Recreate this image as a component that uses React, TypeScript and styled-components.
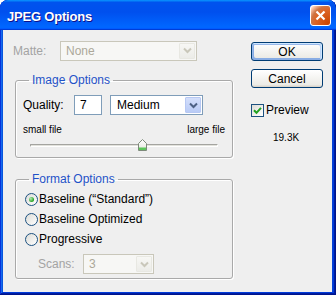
import React from "react";
import styled, { createGlobalStyle } from "styled-components";

const Global = createGlobalStyle`
  html, body { margin: 0; padding: 0; background: #ffffff; }
  body { font-family: "Liberation Sans", Arial, sans-serif; font-size: 12px; color: #000; }
  * { box-sizing: border-box; }
`;

const Window = styled.div`
  width: 336px;
  height: 295px;
  display: flex;
  flex-direction: column;
  background: #0842d5;
  border-radius: 8px 8px 0 0;
  overflow: hidden;
  box-shadow: inset -1px -1px #00138c, inset 1px 1px #0831d9, inset -2px -2px #001ea0,
    inset 2px 2px #166aee, inset -3px -3px #003bda, inset 3px 3px #0855dd;
`;

const TitleBar = styled.div`
  height: 30px;
  flex: none;
  display: flex;
  align-items: center;
  justify-content: space-between;
  padding: 3px 5px 0 7px;
  border-radius: 8px 8px 0 0;
  background: linear-gradient(
    180deg,
    #0997ff,
    #0053ee 8%,
    #0050ee 40%,
    #06f 88%,
    #06f 93%,
    #005bff 95%,
    #003dd7 96%,
    #003dd7
  );
`;

const TitleText = styled.span`
  color: #fff;
  font-weight: bold;
  font-size: 13px;
  letter-spacing: -0.2px;
  text-shadow: 1px 1px #0f1089;
`;

const CloseButton = styled.div`
  width: 21px;
  height: 21px;
  margin-top: -2px;
  border: 1px solid #fff;
  border-radius: 3px;
  display: flex;
  align-items: center;
  justify-content: center;
  background: radial-gradient(circle at 90% 90%, #cc4600 0%, #dc6527 55%, #cd7546 70%, #ffccb2 90%, #fff 100%);
`;

const Body = styled.div`
  flex: 1;
  margin: 0 4px 3px 3px;
  background: #efefef;
  display: flex;
  gap: 18px;
  padding: 10px 0 0 10px;
`;

const LeftCol = styled.div`
  width: 220px;
  display: flex;
  flex-direction: column;
`;

const RightCol = styled.div`
  width: 72px;
  display: flex;
  flex-direction: column;
  padding-top: 2px;
`;

const Row = styled.div<{ $h?: number }>`
  display: flex;
  align-items: center;
  height: ${(p) => p.$h ?? 20}px;
`;

const Label = styled.span<{ $w?: number; $disabled?: boolean }>`
  font-size: 12px;
  width: ${(p) => (p.$w ? `${p.$w}px` : "auto")};
  flex: none;
  color: ${(p) => (p.$disabled ? "#a3a3a3" : "#000")};
`;

const Group = styled.fieldset<{ $mt: number; $pt: number; $pb: number }>`
  margin: ${(p) => p.$mt}px 0 0 2px;
  width: 218px;
  padding: ${(p) => p.$pt}px 7px ${(p) => p.$pb}px 7px;
  border: 1px solid #a9a9a9;
  border-radius: 3px;
  box-shadow: 1px 1px 0 #ffffff, inset 1px 1px 0 #ffffff;
  min-width: 0;
`;

const Legend = styled.legend`
  margin-left: 6px;
  padding: 0 3px;
  font-size: 12px;
  line-height: 14px;
  color: #1f52c8;
`;

const SelectBox = styled.div<{ $w: number; $disabled?: boolean; $h?: number }>`
  width: ${(p) => p.$w}px;
  height: ${(p) => p.$h ?? 20}px;
  flex: none;
  display: flex;
  align-items: stretch;
  border: 1px solid ${(p) => (p.$disabled ? "#c9c7ba" : "#7f9db9")};
  background: ${(p) => (p.$disabled ? "#f7f7f5" : "#fff")};
`;

const SelectValue = styled.span<{ $disabled?: boolean; $pl: number }>`
  flex: 1;
  display: flex;
  align-items: center;
  padding-left: ${(p) => p.$pl}px;
  font-size: 12px;
  color: ${(p) => (p.$disabled ? "#aca899" : "#000")};
`;

const ArrowButton = styled.span<{ $disabled?: boolean }>`
  width: 16px;
  margin: 1px;
  flex: none;
  display: flex;
  align-items: center;
  justify-content: center;
  border: 1px solid ${(p) => (p.$disabled ? "#e8e8e2" : "#b7c8f3")};
  border-radius: 1px;
  background: ${(p) =>
    p.$disabled
      ? "linear-gradient(180deg, #f7f7f4, #ececE8)"
      : "linear-gradient(180deg, #d4dffb, #b9cbf6)"};
`;

const TextInput = styled.div`
  width: 28px;
  height: 20px;
  flex: none;
  display: flex;
  align-items: center;
  padding-left: 5px;
  margin-right: 8px;
  border: 1px solid #7f9db9;
  background: #fff;
  font-size: 12px;
`;

const ScaleLabels = styled.div`
  display: flex;
  justify-content: space-between;
  margin-top: 9px;
  font-size: 10px;
  line-height: 12px;
  height: 12px;
`;

const SliderWrap = styled.div`
  position: relative;
  height: 14px;
  margin: 2px 7px 0 7px;
  display: flex;
  align-items: center;
`;

const Track = styled.div`
  flex: 1;
  height: 3px;
  border-top: 1px solid #a4a4a0;
  border-left: 1px solid #a4a4a0;
  border-bottom: 1px solid #ffffff;
  border-right: 1px solid #ffffff;
  background: #e2e2dc;
  border-radius: 1px;
`;

const Thumb = styled.svg`
  position: absolute;
  top: 1px;
`;

const RadioRow = styled.label`
  display: flex;
  align-items: center;
  height: 20px;
  padding-left: 2px;
  gap: 1px;
  font-size: 12px;
`;

const RadioCircle = styled.span<{ $checked?: boolean }>`
  width: 13px;
  height: 13px;
  flex: none;
  border-radius: 50%;
  border: 1px solid #1c5180;
  background: linear-gradient(135deg, #dcdcd7, #ffffff);
  display: flex;
  align-items: center;
  justify-content: center;
  &::after {
    content: "";
    display: ${(p) => (p.$checked ? "block" : "none")};
    width: 5px;
    height: 5px;
    border-radius: 50%;
    background: radial-gradient(circle at 35% 35%, #b8ecb4, #21a121 70%);
  }
`;

const ScansRow = styled.div`
  display: flex;
  align-items: center;
  margin-top: 5px;
  padding-left: 15px;
  height: 20px;
`;

const Button = styled.button<{ $default?: boolean }>`
  width: 72px;
  height: 19px;
  padding: 0;
  font-family: "Liberation Sans", Arial, sans-serif;
  font-size: 12px;
  color: #000;
  border: 1px solid #003c74;
  border-radius: 3px;
  background: linear-gradient(180deg, #ffffff, #ecebe6 86%, #d6d0c5);
  box-shadow: ${(p) =>
    p.$default
      ? "inset -1px 1px #cee7ff, inset 1px 2px #98b8ea, inset -2px 2px #bcd4f6, inset 1px -1px #89ade4, inset 2px -2px #89ade4"
      : "none"};
  & + & {
    margin-top: 8px;
  }
`;

const CheckRow = styled.label`
  display: flex;
  align-items: center;
  gap: 2px;
  height: 16px;
  margin-top: 14px;
  font-size: 12px;
`;

const CheckBox = styled.span`
  width: 13px;
  height: 13px;
  flex: none;
  border: 1px solid #1c5180;
  background: linear-gradient(135deg, #dcdcd7, #ffffff);
  display: flex;
  align-items: center;
  justify-content: center;
`;

const SizeText = styled.span`
  font-size: 10px;
  margin-top: 14px;
  padding-left: 22px;
`;

const Chevron = ({ disabled }: { disabled?: boolean }) => (
  <svg width="9" height="7" viewBox="0 0 9 7">
    <path
      d="M1 1.5 L4.5 5 L8 1.5"
      fill="none"
      stroke={disabled ? "#c9c7ba" : "#4d6185"}
      strokeWidth="2"
    />
  </svg>
);

const Select = ({
  value,
  width,
  disabled,
  pl,
}: {
  value: string;
  width: number;
  disabled?: boolean;
  pl: number;
}) => (
  <SelectBox $w={width} $disabled={disabled}>
    <SelectValue $disabled={disabled} $pl={pl}>
      {value}
    </SelectValue>
    <ArrowButton $disabled={disabled}>
      <Chevron disabled={disabled} />
    </ArrowButton>
  </SelectBox>
);

export default function App() {
  const quality = 7;
  const frac = quality / 12;
  return (
    <>
      <Global />
      <Window>
        <TitleBar>
          <TitleText>JPEG Options</TitleText>
          <CloseButton>
            <svg width="11" height="11" viewBox="0 0 11 11">
              <path d="M1.5 1.5 L9.5 9.5 M9.5 1.5 L1.5 9.5" stroke="#fff" strokeWidth="2.2" />
            </svg>
          </CloseButton>
        </TitleBar>
        <Body>
          <LeftCol>
            <Row $h={21}>
              <Label $w={47} $disabled>
                Matte:
              </Label>
              <Select value="None" width={137} disabled pl={5} />
            </Row>
            <Group $mt={12} $pt={8} $pb={5}>
              <Legend>Image Options</Legend>
              <Row>
                <Label $w={51}>Quality:</Label>
                <TextInput>{quality}</TextInput>
                <Select value="Medium" width={93} pl={6} />
              </Row>
              <ScaleLabels>
                <span>small file</span>
                <span>large file</span>
              </ScaleLabels>
              <SliderWrap>
                <Track />
                <Thumb
                  width="9"
                  height="12"
                  viewBox="0 0 9 12"
                  style={{ left: `calc(${frac * 100}% - 2px)` }}
                >
                  <defs>
                    <linearGradient id="tg" x1="0" y1="0" x2="0" y2="1">
                      <stop offset="0" stopColor="#ffffff" />
                      <stop offset="1" stopColor="#e6e6de" />
                    </linearGradient>
                  </defs>
                  <path d="M4.5 0.5 L8.5 4.5 L8.5 11.5 L0.5 11.5 L0.5 4.5 Z" fill="url(#tg)" stroke="#7d8a7a" />
                  <rect x="1" y="8.5" width="7" height="2.5" fill="#5cc75a" />
                </Thumb>
              </SliderWrap>
            </Group>
            <Group $mt={14} $pt={3} $pb={4}>
              <Legend>Format Options</Legend>
              <RadioRow>
                <RadioCircle $checked />
                Baseline (“Standard”)
              </RadioRow>
              <RadioRow>
                <RadioCircle />
                Baseline Optimized
              </RadioRow>
              <RadioRow>
                <RadioCircle />
                Progressive
              </RadioRow>
              <ScansRow>
                <Label $w={45} $disabled>
                  Scans:
                </Label>
                <Select value="3" width={71} disabled pl={5} />
              </ScansRow>
            </Group>
          </LeftCol>
          <RightCol>
            <Button $default>OK</Button>
            <Button>Cancel</Button>
            <CheckRow>
              <CheckBox>
                <svg width="9" height="9" viewBox="0 0 9 9">
                  <path d="M1 4.2 L3.5 6.8 L8 1.8" fill="none" stroke="#21a121" strokeWidth="2" />
                </svg>
              </CheckBox>
              Preview
            </CheckRow>
            <SizeText>19.3K</SizeText>
          </RightCol>
        </Body>
      </Window>
    </>
  );
}
